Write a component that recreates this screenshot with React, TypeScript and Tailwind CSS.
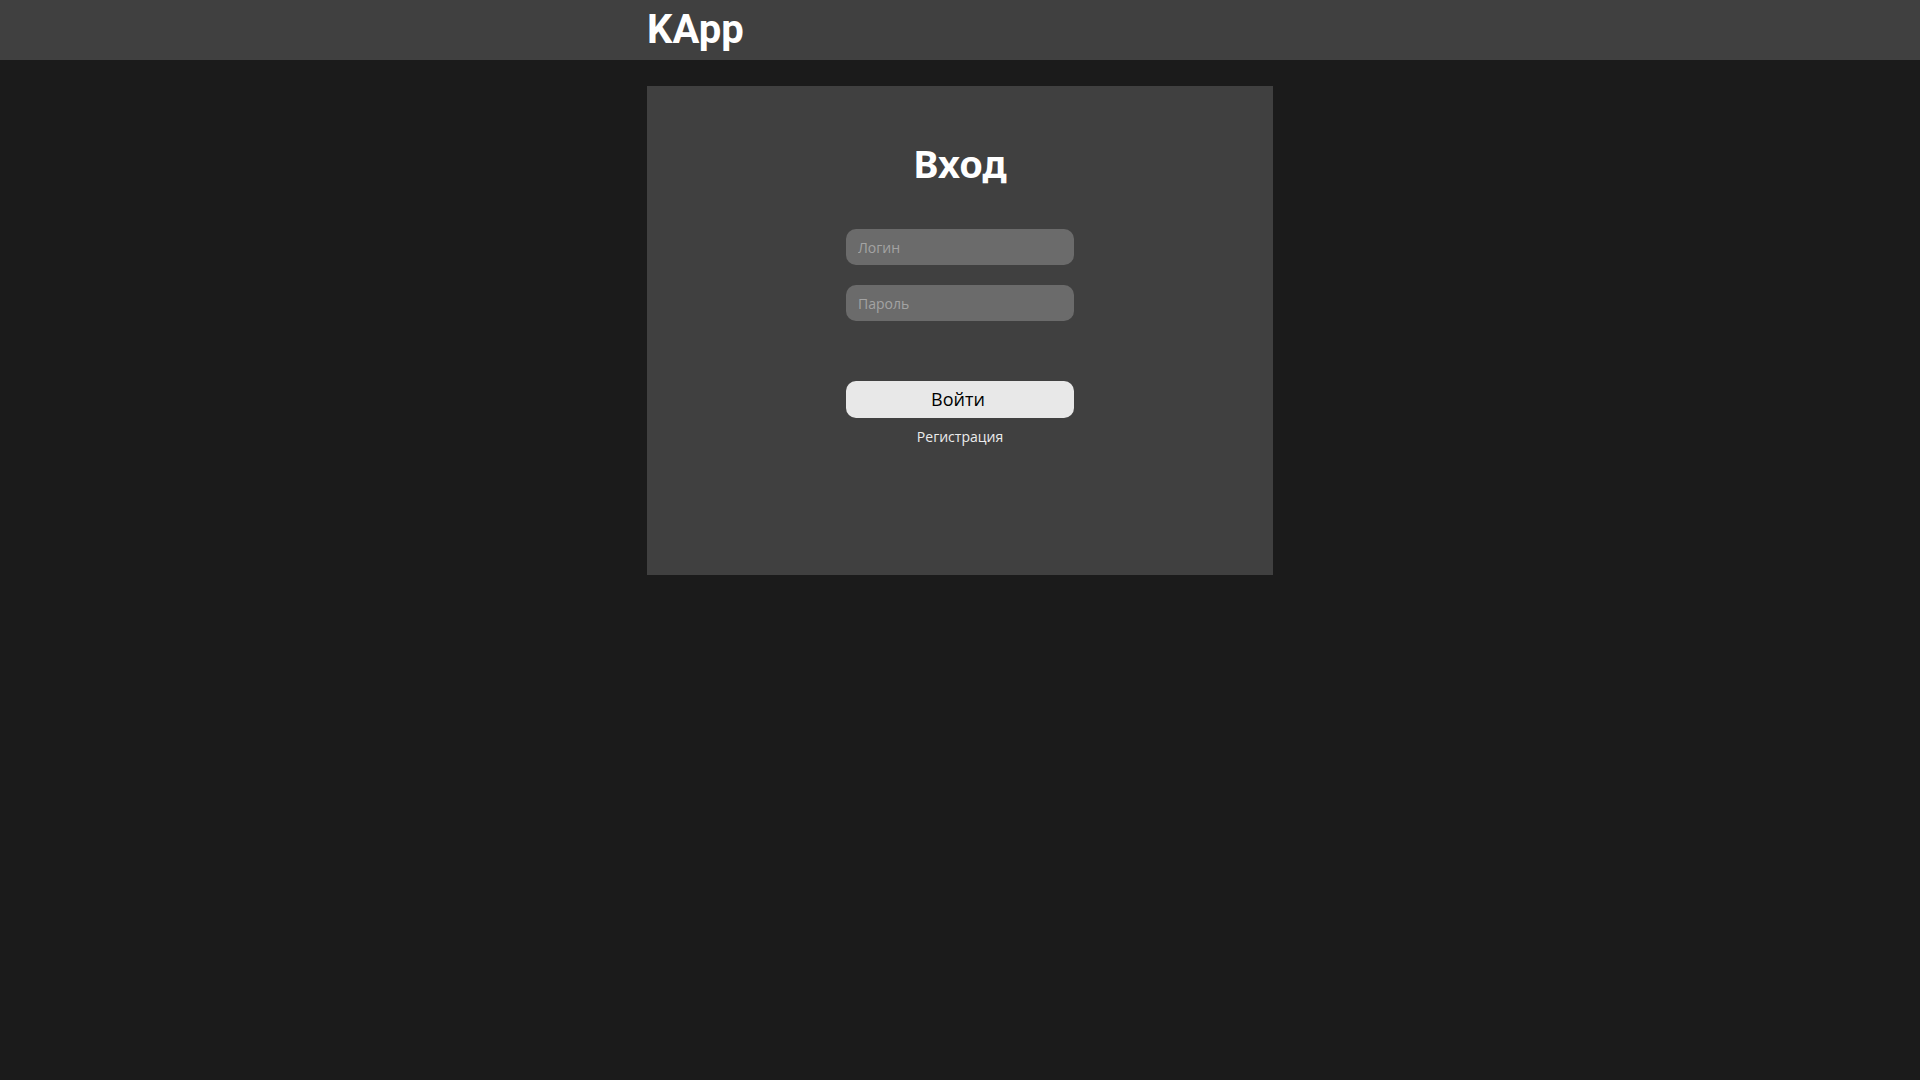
import React from "react";

export default function App() {
  return (
    <div
      className="min-h-screen bg-[#1b1b1b] text-white"
      style={{ fontFamily: '"Open Sans", "Noto Sans", sans-serif' }}
    >
      {/* top bar */}
      <header className="h-[60px] bg-[#404040]">
        <div className="mx-auto flex h-full w-[626px] items-center">
          <span className="font-['Roboto',sans-serif] text-[40px] font-bold leading-[40px]">
            KApp
          </span>
        </div>
      </header>

      <main className="mx-auto mt-[26px] w-[626px] bg-[#404040]">
        <form
          className="flex h-[489px] flex-col items-center pt-[58px]"
          onSubmit={(e) => e.preventDefault()}
        >
          <h1 className="font-['Noto_Sans',sans-serif] text-[38px] font-bold leading-[38px]">
            Вход
          </h1>

          <input
            type="text"
            placeholder="Логин"
            className="mt-[47px] h-[36px] w-[228px] rounded-[10px] bg-[#6b6b6b] px-3 text-[14px] text-white outline-none placeholder:text-[#a3a3a3]"
          />
          <input
            type="password"
            placeholder="Пароль"
            className="mt-[20px] h-[36px] w-[228px] rounded-[10px] bg-[#6b6b6b] px-3 text-[14px] text-white outline-none placeholder:text-[#a3a3a3]"
          />

          <button
            type="submit"
            className="mt-[60px] h-[37px] w-[228px] rounded-[10px] bg-[#e8e8e8] pr-1 text-[18px] text-black"
          >
            Войти
          </button>
          <a href="#" className="mt-[9px] text-[14px] leading-[20px] text-[#ececec]">
            Регистрация
          </a>
        </form>
      </main>
    </div>
  );
}
